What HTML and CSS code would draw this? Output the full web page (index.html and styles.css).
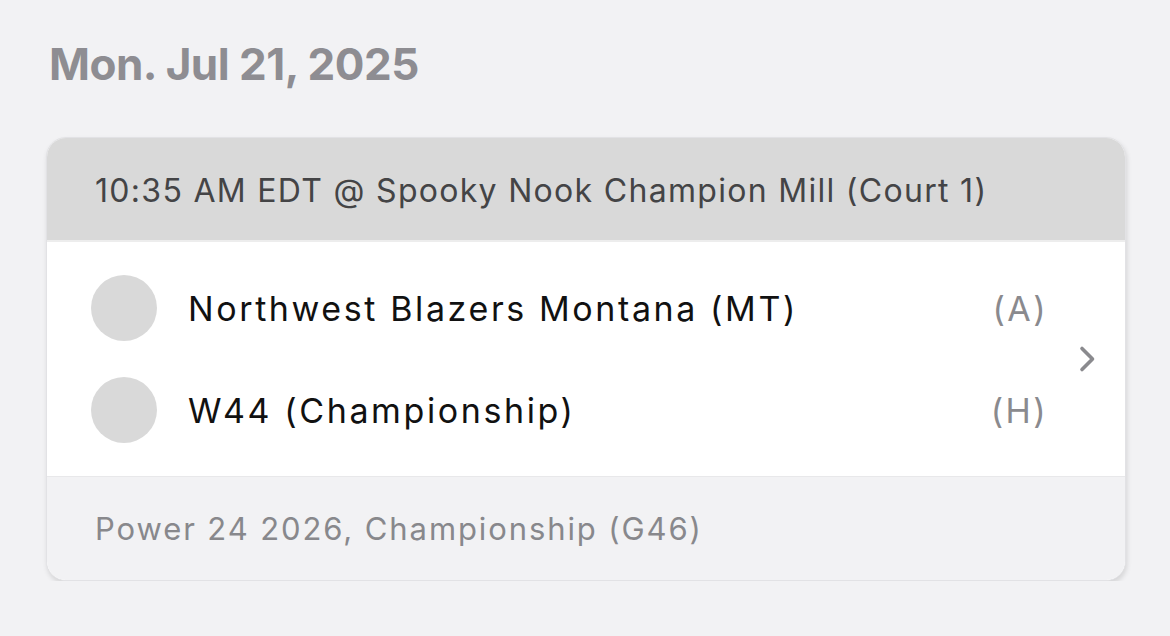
FILE: index.html
```html
<!DOCTYPE html>
<html lang="en">
<head>
<meta charset="utf-8">
<title>Schedule</title>
<link rel="stylesheet" href="styles.css">
</head>
<body>
<main class="page">
  <h1 class="date">Mon. Jul 21, 2025</h1>
  <section class="card">
    <header class="card-head">10:35 AM EDT @ Spooky Nook Champion Mill (Court 1)</header>
    <div class="card-body">
      <div class="teams">
        <div class="team">
          <span class="logo"></span>
          <span class="name">Northwest Blazers Montana (MT)</span>
          <span class="side">(A)</span>
        </div>
        <div class="team">
          <span class="logo"></span>
          <span class="name">W44 (Championship)</span>
          <span class="side">(H)</span>
        </div>
      </div>
      <svg class="chev" width="20" height="30" viewBox="0 0 20 30" aria-hidden="true">
        <path d="M4 4.5 L14.5 15 L4 25.5" fill="none" stroke="#8a8a8e" stroke-width="3.6" stroke-linecap="round" stroke-linejoin="round"/>
      </svg>
    </div>
    <footer class="card-foot">Power 24 2026, Championship (G46)</footer>
  </section>
</main>
</body>
</html>
```

FILE: styles.css
```css
html, body {
  margin: 0;
  padding: 0;
  background: #f2f2f4;
}
body {
  font-family: "Inter", "Noto Sans", sans-serif;
}
.page {
  padding: 34px 45px 0 46px;
}
.date {
  margin: 0 0 0 3px;
  font-size: 44px;
  line-height: 60px;
  font-weight: 700;
  color: #8e8d92;
  letter-spacing: -0.5px;
}
.card {
  margin-top: 43px;
  width: 1078px;
  border: 1px solid #e2e2e5;
  border-radius: 20px;
  overflow: hidden;
  box-shadow: 1px 3px 5px rgba(0, 0, 0, 0.12);
  background: #fff;
}
.card-head {
  background: #d9d9d9;
  height: 104px;
  border-bottom: 2px solid #ededed;
  box-sizing: border-box;
  display: flex;
  align-items: center;
  padding: 2px 0 0 48px;
  font-size: 32px;
  letter-spacing: 1.3px;
  color: #444446;
}
.card-body {
  display: flex;
  align-items: center;
  background: #fff;
  height: 234px;
}
.teams {
  flex: 1;
  display: flex;
  flex-direction: column;
  gap: 36px;
  padding-left: 44px;
}
.team {
  display: flex;
  align-items: center;
  height: 66px;
}
.logo {
  width: 66px;
  height: 66px;
  border-radius: 50%;
  background: #d9d9d9;
  flex: none;
}
.name {
  flex: 1;
  margin-left: 31px;
  font-size: 34px;
  letter-spacing: 2.6px;
  color: #111;
}
.side {
  font-size: 34px;
  letter-spacing: 2.4px;
  margin-right: -2px;
  color: #8a8a8e;
}
.chev {
  margin: 0 27px 0 32px;
  flex: none;
}
.card-foot {
  background: #f2f2f4;
  border-top: 1px solid #e8e8ea;
  height: 104px;
  box-sizing: border-box;
  display: flex;
  align-items: center;
  padding-left: 48px;
  font-size: 31px;
  letter-spacing: 1.9px;
  color: #88888c;
}
```
